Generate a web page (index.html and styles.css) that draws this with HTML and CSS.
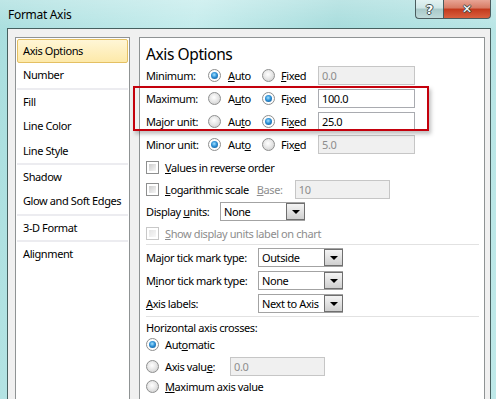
FILE: index.html
```html
<!DOCTYPE html>
<html lang="en">
<head>
  <meta charset="UTF-8" />
  <title>Format Axis</title>
  <link rel="stylesheet" href="styles.css">
</head>
<body>
  <div class="window">
    <div class="titlebar">
      <span class="title">Format Axis</span>
      <div class="caption-btns">
        <span class="cap-btn help">?</span>
        <span class="cap-btn close">&#x2715;</span>
      </div>
    </div>

    <div class="client">
      <!-- category list -->
      <ul class="nav">
        <li class="nav-item active">Axis Options</li>
        <li class="nav-item">Number</li>
        <li class="nav-sep"></li>
        <li class="nav-item">Fill</li>
        <li class="nav-item">Line Color</li>
        <li class="nav-item">Line Style</li>
        <li class="nav-sep"></li>
        <li class="nav-item">Shadow</li>
        <li class="nav-item">Glow and Soft Edges</li>
        <li class="nav-sep"></li>
        <li class="nav-item">3-D Format</li>
        <li class="nav-sep"></li>
        <li class="nav-item">Alignment</li>
      </ul>

      <!-- options pane -->
      <div class="pane">
        <h2 class="pane-title">Axis Options</h2>

        <div class="row">
          <span class="lbl lbl-unit">Minimum:</span>
          <span class="opt opt-auto"><i class="radio on"></i><span><u>A</u>uto</span></span>
          <span class="opt opt-fixed"><i class="radio"></i><span><u>F</u>ixed</span></span>
          <span class="field field-unit disabled">0.0</span>
        </div>
        <div class="row">
          <span class="lbl lbl-unit">Maximum:</span>
          <span class="opt opt-auto"><i class="radio"></i><span>A<u>u</u>to</span></span>
          <span class="opt opt-fixed"><i class="radio on"></i><span>F<u>i</u>xed</span></span>
          <span class="field field-unit">100.0</span>
        </div>
        <div class="row">
          <span class="lbl lbl-unit">Major unit:</span>
          <span class="opt opt-auto"><i class="radio"></i><span>Au<u>t</u>o</span></span>
          <span class="opt opt-fixed"><i class="radio on"></i><span>Fi<u>x</u>ed</span></span>
          <span class="field field-unit">25.0</span>
        </div>
        <div class="row">
          <span class="lbl lbl-unit">Minor unit:</span>
          <span class="opt opt-auto"><i class="radio on"></i><span>Aut<u>o</u></span></span>
          <span class="opt opt-fixed"><i class="radio"></i><span>Fix<u>e</u>d</span></span>
          <span class="field field-unit disabled">5.0</span>
        </div>

        <div class="row row-sm">
          <span class="opt"><i class="check"></i><span><u>V</u>alues in reverse order</span></span>
        </div>
        <div class="row row-sm">
          <span class="opt"><i class="check"></i><span><u>L</u>ogarithmic scale</span></span>
          <span class="lbl lbl-base muted"><u>B</u>ase:</span>
          <span class="field field-base disabled">10</span>
        </div>
        <div class="row row-sm">
          <span class="lbl lbl-disp">Display <u>u</u>nits:</span>
          <span class="select"><span class="val">None</span><span class="drop"></span></span>
        </div>
        <div class="row row-sm">
          <span class="opt muted"><i class="check disabled"></i><span><u>S</u>how display units label on chart</span></span>
        </div>

        <div class="sep"></div>

        <div class="row">
          <span class="lbl lbl-tick">Ma<u>j</u>or tick mark type:</span>
          <span class="select"><span class="val">Outside</span><span class="drop"></span></span>
        </div>
        <div class="row">
          <span class="lbl lbl-tick">M<u>i</u>nor tick mark type:</span>
          <span class="select"><span class="val">None</span><span class="drop"></span></span>
        </div>
        <div class="row">
          <span class="lbl lbl-tick"><u>A</u>xis labels:</span>
          <span class="select"><span class="val">Next to Axis</span><span class="drop"></span></span>
        </div>

        <div class="sep sep-b"></div>

        <div class="row row-caption">Horizontal axis crosses:</div>
        <div class="row row-auto">
          <span class="opt"><i class="radio on"></i><span>Aut<u>o</u>matic</span></span>
        </div>
        <div class="row row-value">
          <span class="opt opt-value"><i class="radio"></i><span>Axis valu<u>e</u>:</span></span>
          <span class="field field-value disabled">0.0</span>
        </div>
        <div class="row row-max">
          <span class="opt"><i class="radio"></i><span><u>M</u>aximum axis value</span></span>
        </div>

        <!-- annotation drawn over the dialog -->
        <div class="highlight"></div>
      </div>
    </div>
  </div>
</body>
</html>
```

FILE: styles.css
```css
:root {
  --frame-line: #46605f;
  --client-bg: #f0f0f0;
  --panel-border: #8f9394;
  --text: #000000;
  --muted: #8d8d8d;
  --sep: #e2e2e2;
}

html, body { height: 100%; margin: 0; }
body {
  font-family: "Noto Sans", "Open Sans", sans-serif;
  font-size: 11px;
  letter-spacing: -0.4px;
  color: var(--text);
  overflow: hidden;
}

.window {
  width: 496px;
  height: 399px;
  display: flex;
  flex-direction: column;
  background:
    linear-gradient(180deg, rgba(255,255,255,.25), rgba(255,255,255,0) 30px),
    linear-gradient(100deg, #a9dede 0%, #c4ecec 35%, #a6dcdc 60%, #bfe9e9 100%);
  overflow: hidden;
}

/* title bar */
.titlebar { height: 28px; flex: none; display: flex; justify-content: space-between; align-items: flex-start; padding: 0 5px 0 8px; }
.title { padding-top: 6px; line-height: 18px; font-size: 12px; letter-spacing: -0.3px; }
.caption-btns { display: flex; }
.cap-btn {
  height: 19px; box-sizing: border-box; border: 1px solid #4a5c5e; border-top: none;
  display: flex; align-items: center; justify-content: center;
  font-family: "DejaVu Sans", sans-serif; font-weight: bold; color: #fff; letter-spacing: 0;
  text-shadow: -1px 0 #3b4a4c, 1px 0 #3b4a4c, 0 -1px #3b4a4c, 0 1px #3b4a4c;
}
.help { width: 28px; border-radius: 0 0 0 4px; border-right: none; font-size: 13px;
  background: linear-gradient(180deg, #e3f2f2 0%, #cfe6e6 45%, #a9c9c9 50%, #bfdada 100%); }
.close { width: 48px; border-radius: 0 0 4px 0; font-size: 12px;
  background: linear-gradient(180deg, #e8a595 0%, #d77a63 45%, #c3391c 50%, #d9603e 100%); }

/* client area */
.client {
  flex: 1;
  margin: 0 5px 0 7px;
  border: 1px solid var(--frame-line);
  border-bottom: none;
  background: var(--client-bg);
  display: flex;
  gap: 9px;
  padding: 8px 5px 0 7px;
  min-height: 0;
}

.nav {
  list-style: none; margin: 0; padding: 1px;
  width: 115px; height: 400px; box-sizing: border-box; flex: none;
  background: #fff; border: 1px solid var(--panel-border);
}
.nav-item { height: 24.4px; line-height: 24px; padding-left: 6px; box-sizing: border-box; white-space: nowrap; }
.nav-item.active {
  height: 24px; margin-bottom: 0.4px;
  border: 1px solid #e4c063; border-radius: 2px; padding-left: 5px; line-height: 22px;
  background: linear-gradient(180deg, #fff6d6 0%, #fde9a9 100%);
}
.nav-sep { height: 2px; background: #ececf0; }

.pane {
  position: relative;
  flex: 1; height: 400px; box-sizing: border-box;
  background: #fff; border: 1px solid var(--panel-border);
  padding: 0 5px 0 6px;
}
.pane-title { margin: 0; padding-top: 6px; height: 26px; box-sizing: border-box; line-height: 20px; font-size: 15.5px; font-weight: normal; }

.row { display: flex; align-items: center; height: 23px; white-space: nowrap; }
.row-sm { height: 22px; }
.row-caption { height: 16px; }
.row-auto { height: 18px; }
.row-value { height: 26px; }
.row-max { height: 14px; }

.lbl { flex: none; }
.lbl-unit { width: 62px; }
.lbl-disp { width: 74px; }
.lbl-tick { width: 112px; }
.lbl-base { margin-left: 8px; width: 38px; }
.muted { color: var(--muted); }

.opt { display: flex; align-items: center; gap: 6px; flex: none; }
.opt-auto { width: 54px; gap: 7px; }
.opt-fixed { width: 56px; }
.opt-value { width: 84px; }

.radio {
  width: 13px; height: 13px; box-sizing: border-box; flex: none; position: relative;
  border: 1px solid #8e8f8f; border-radius: 50%;
  background: radial-gradient(circle at 45% 40%, #ffffff 0%, #e8e8e8 45%, #c8c8c8 100%);
}
.radio.on { background: #fdfdfd; }
.radio.on::after {
  content: ''; position: absolute; inset: 2px; border-radius: 50%;
  background: radial-gradient(circle at 45% 40%, #a6e3ff 0%, #2d90d6 45%, #0f4d86 100%);
}
.check {
  width: 13px; height: 13px; box-sizing: border-box; flex: none; position: relative;
  border: 1px solid #8e8f8f; background: #fff;
}
.check::after { content: ''; position: absolute; inset: 2px; background: linear-gradient(135deg, #cdcdcd, #f6f6f6); }
.check.disabled { border-color: #c8c8c8; }
.check.disabled::after { background: linear-gradient(135deg, #e4e4e4, #f8f8f8); }

.field {
  height: 19px; box-sizing: border-box; line-height: 17px; padding: 0 3px;
  border: 1px solid #a9abb0; background: #fff; flex: none;
}
.field.disabled { background: #f0f0f0; border-color: #c6c6c6; color: var(--muted); }
.field-unit { width: 97px; }
.field-base { width: 95px; }
.field-value { width: 95px; }

.select {
  display: flex; width: 85px; height: 19px; box-sizing: border-box; flex: none;
  border: 1px solid #a3a3a3; background: #fff;
}
.select .val { flex: 1; padding-left: 3px; line-height: 17px; overflow: hidden; }
.drop {
  width: 19px; box-sizing: border-box; flex: none;
  border: 1px solid #6f6f6f; margin: 0 -1px 0 0;
  background: linear-gradient(180deg, #f4f4f4 0%, #e2e2e2 50%, #cfcfcf 100%);
  display: flex; align-items: center; justify-content: center;
}
.drop::after { content: ''; border: 4px solid transparent; border-top: 4px solid #000; border-bottom: 0; margin-top: 1px; }

.sep { height: 0; border-top: 1px solid var(--sep); margin-bottom: 1px; }
.sep-b { margin-top: 1px; margin-bottom: 2px; }

.highlight {
  position: absolute; left: -7px; top: 48px;
  width: 296px; height: 45px; box-sizing: border-box;
  border: 2px solid #c4000c;
  box-shadow: 2px 3px 4px rgba(0,0,0,.25);
}
```
